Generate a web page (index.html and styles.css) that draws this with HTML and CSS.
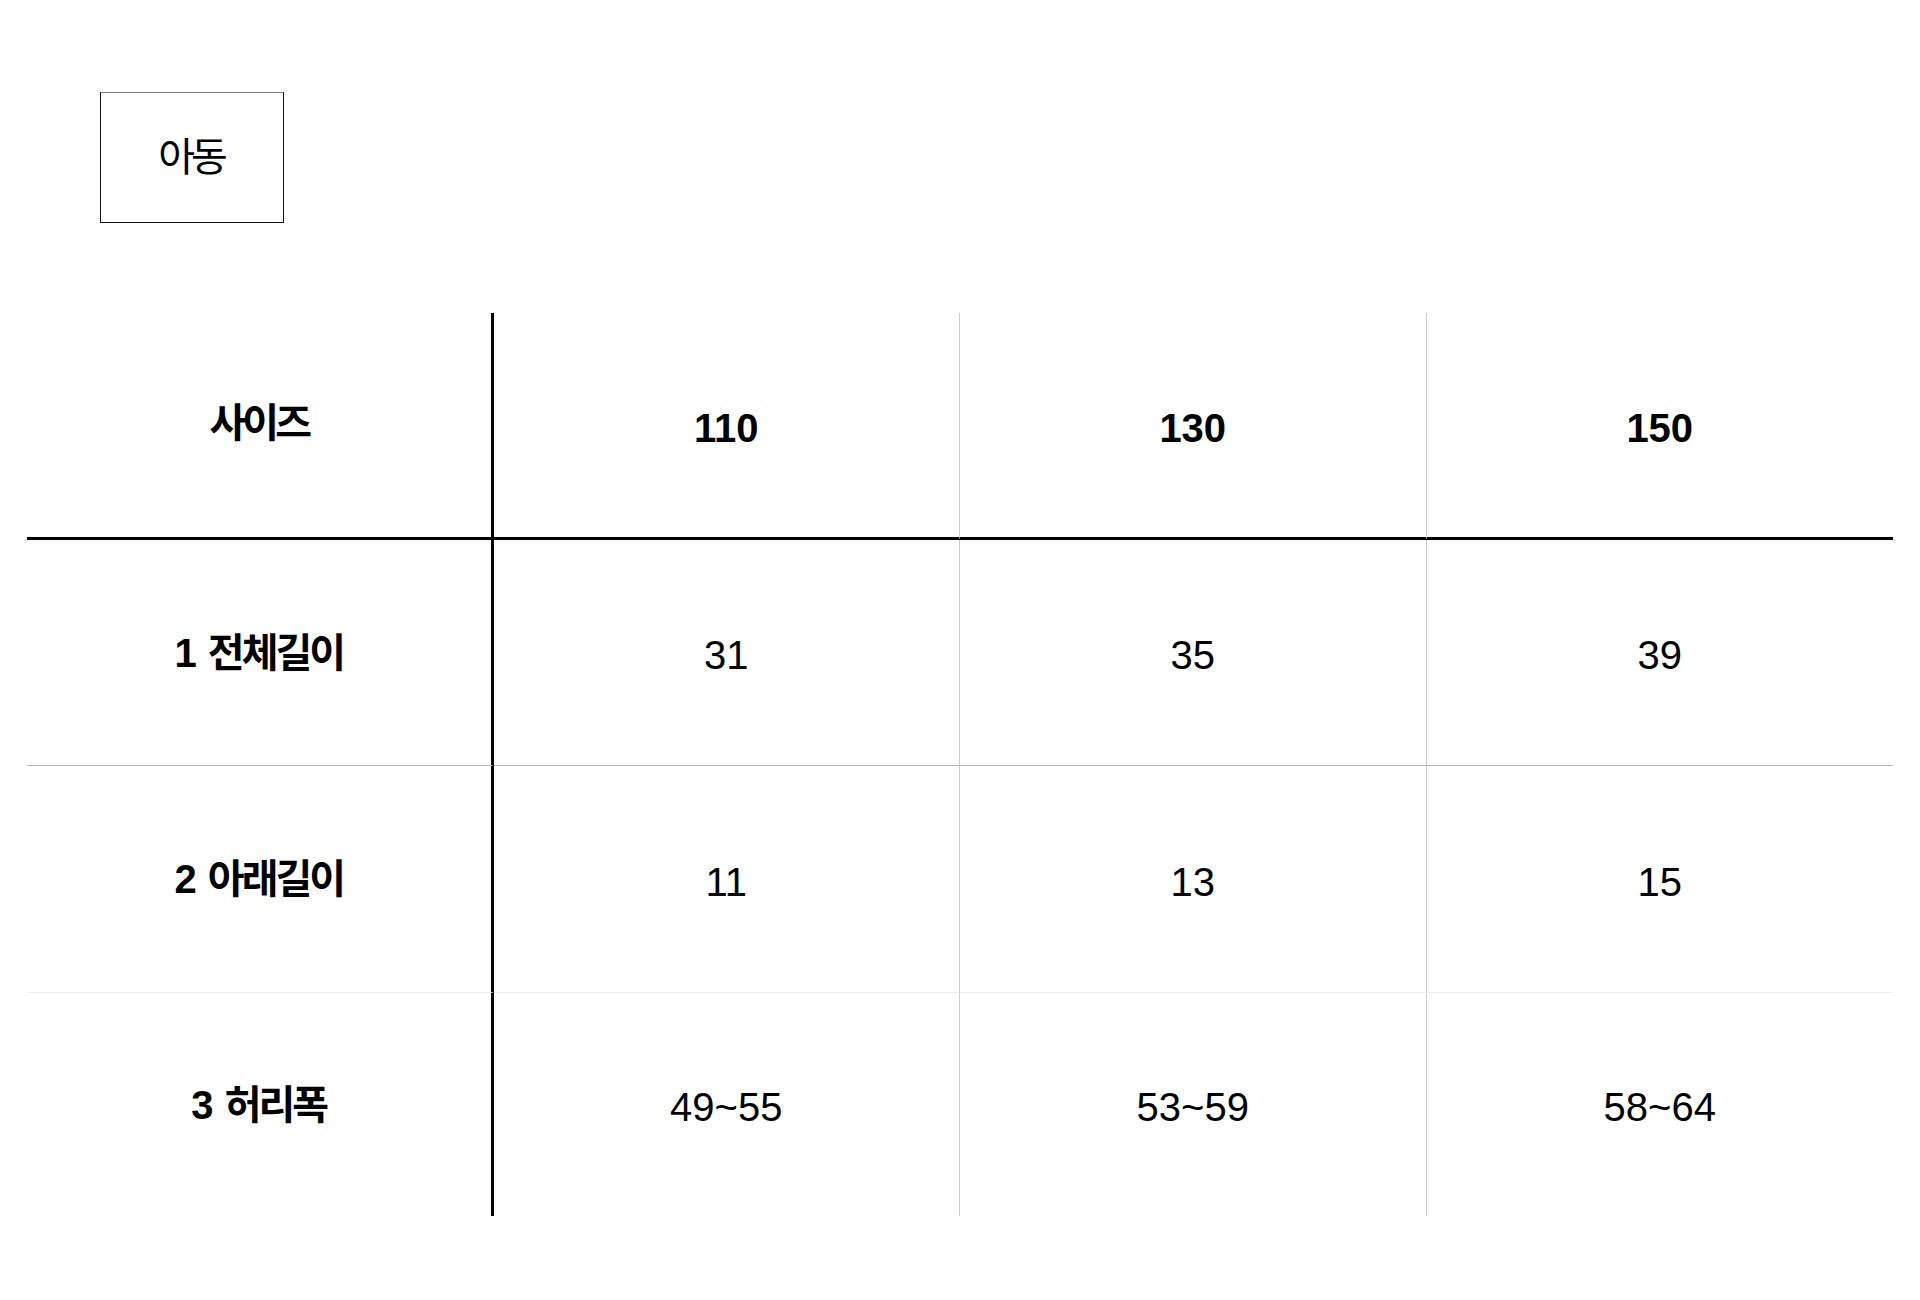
FILE: index.html
```html
<!DOCTYPE html>
<html lang="ko">
<head>
<meta charset="utf-8">
<title>아동 사이즈</title>
<link rel="stylesheet" href="styles.css">
</head>
<body>
<div class="page">
  <div class="tag-wrap">
    <div class="tag"><span>아동</span></div>
  </div>
  <div class="size-table">
    <div class="cell head first"><span class="label ko-lift">사이즈</span></div>
    <div class="cell head num"><span>110</span></div>
    <div class="cell head num"><span>130</span></div>
    <div class="cell head num last"><span>150</span></div>

    <div class="cell r1 first"><span class="label">1 <span class="ko">전체길이</span></span></div>
    <div class="cell r1 num"><span>31</span></div>
    <div class="cell r1 num"><span>35</span></div>
    <div class="cell r1 num last"><span>39</span></div>

    <div class="cell r2 first"><span class="label">2 <span class="ko">아래길이</span></span></div>
    <div class="cell r2 num"><span>11</span></div>
    <div class="cell r2 num"><span>13</span></div>
    <div class="cell r2 num last"><span>15</span></div>

    <div class="cell r3 first"><span class="label">3 <span class="ko">허리폭</span></span></div>
    <div class="cell r3 num"><span>49~55</span></div>
    <div class="cell r3 num"><span>53~59</span></div>
    <div class="cell r3 num last"><span>58~64</span></div>
  </div>
</div>
</body>
</html>
```

FILE: styles.css
```css
html, body {
  margin: 0;
  padding: 0;
  background: #ffffff;
}

body {
  font-family: "Liberation Sans", "Noto Sans CJK KR", sans-serif;
  color: #000000;
}

.page {
  padding: 92px 27px 0 27px;
  display: flex;
  flex-direction: column;
  gap: 90px;
}

.tag-wrap {
  padding-left: 73px;
  display: flex;
}

.tag {
  box-sizing: border-box;
  width: 184px;
  height: 131px;
  border: 1px solid #111111;
  border-top-color: #7a7a7a;
  display: flex;
  align-items: center;
  justify-content: center;
  font-size: 40px;
  letter-spacing: -4px;
  padding: 0 2px 8px 0;
}

.size-table {
  width: 1866px;
  display: grid;
  grid-template-columns: repeat(4, 1fr);
  grid-template-rows: 227px 226px 227px 223px;
}

.cell {
  box-sizing: border-box;
  display: flex;
  align-items: center;
  justify-content: center;
  font-size: 40px;
  line-height: 1;
  border-right: 1px solid #cccccc;
  white-space: nowrap;
}

.cell.num {
  padding-top: 5px;
}

.cell.last {
  border-right: none;
}

.cell.first {
  border-right: 3px solid #000000;
  font-weight: bold;
}

.cell.head {
  font-weight: bold;
  border-bottom: 3px solid #000000;
}

.cell.r1 {
  border-bottom: 1px solid #b9b9b9;
}

.cell.r2 {
  border-bottom: 1px solid #eeeeee;
}

.label {
  white-space: pre;
}

.ko {
  letter-spacing: -3px;
}

.ko-lift {
  letter-spacing: -4px;
  position: relative;
  top: -2px;
}
```
